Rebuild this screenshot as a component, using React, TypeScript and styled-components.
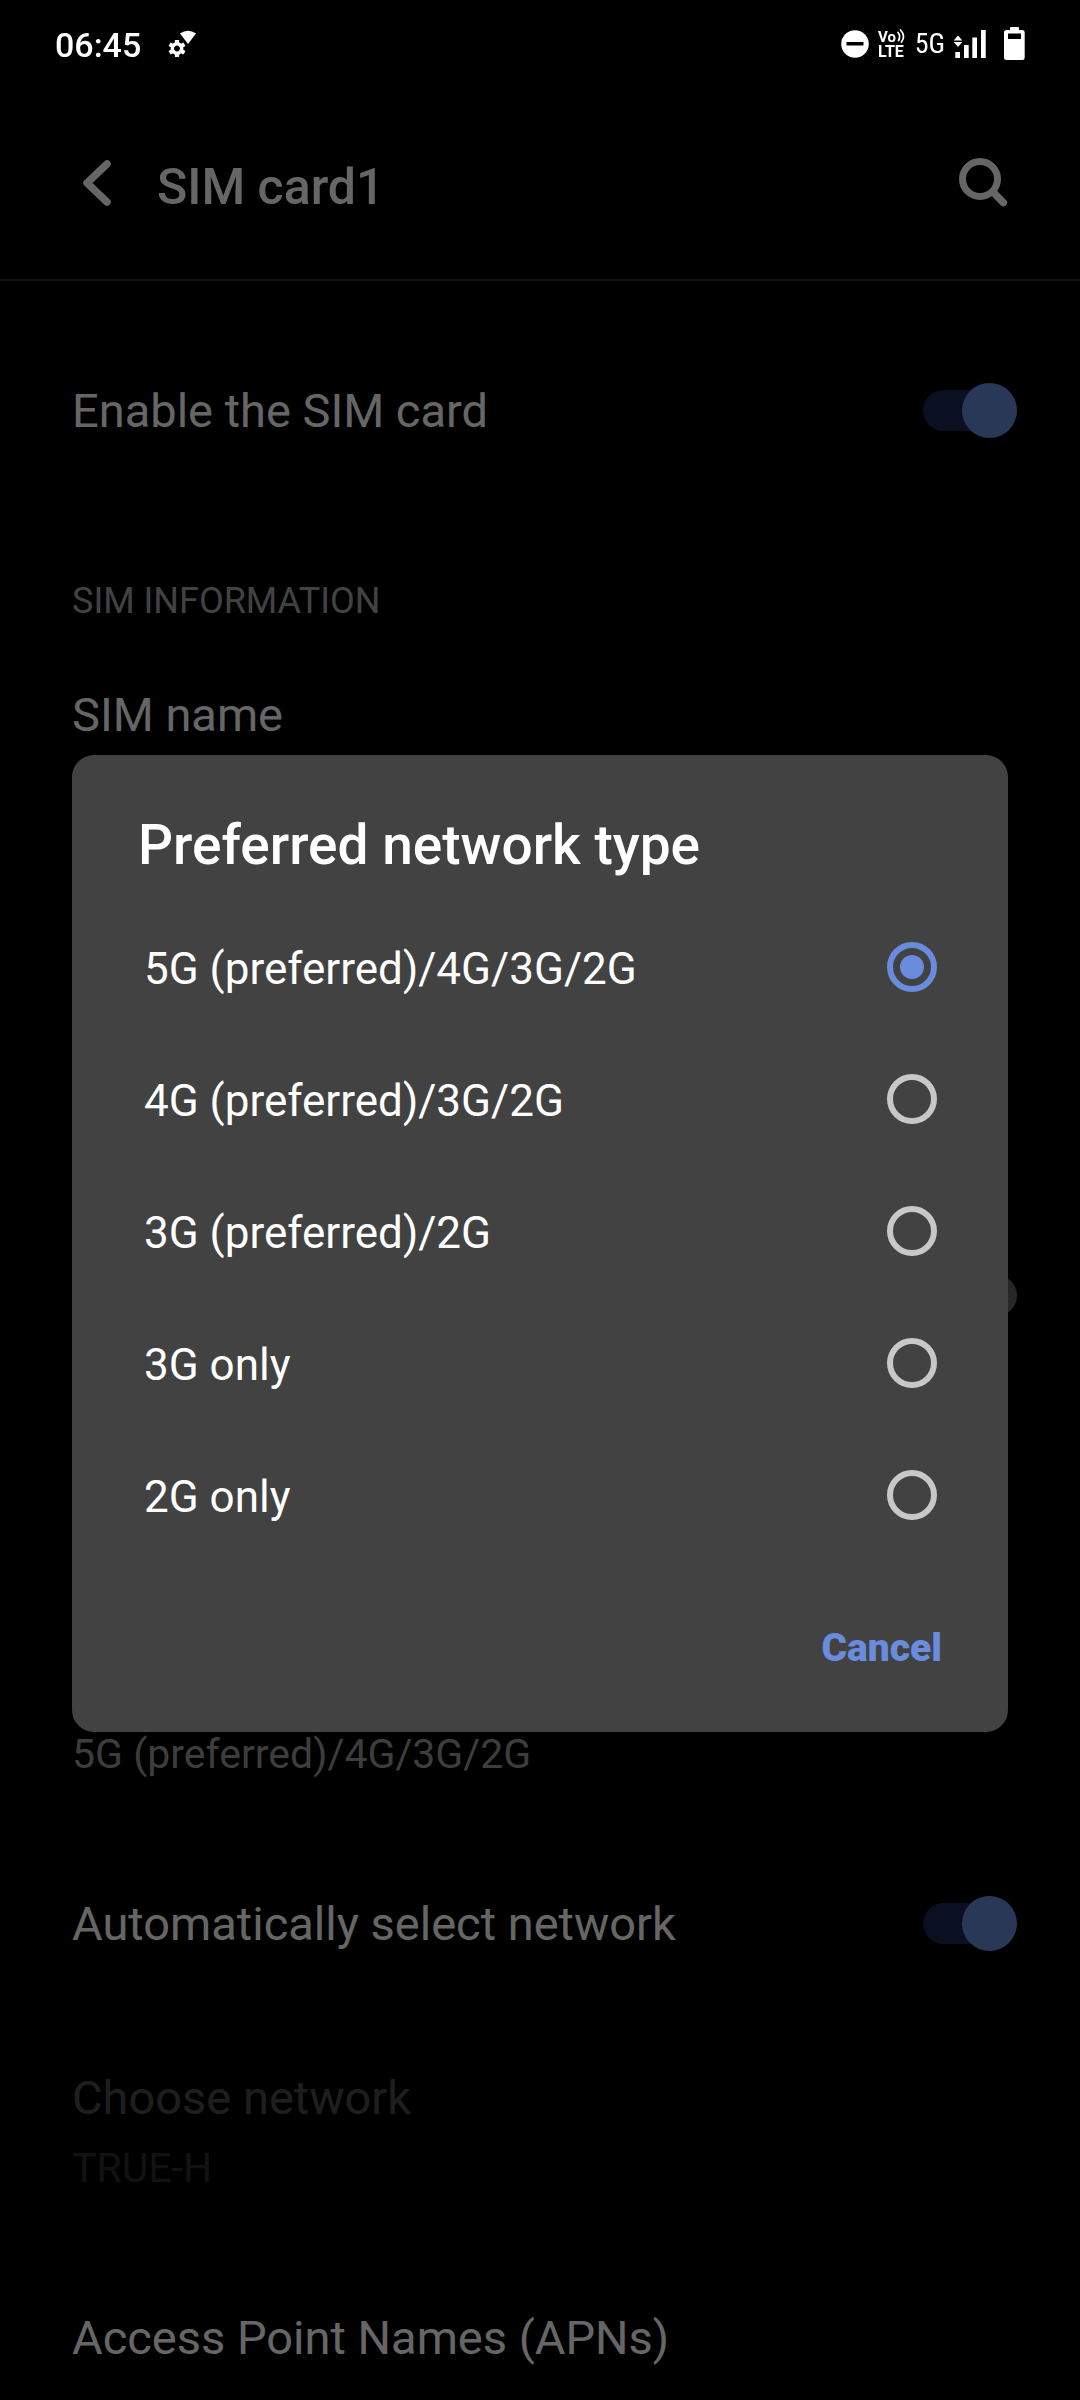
import React, { useState } from "react";
import styled, { createGlobalStyle } from "styled-components";

const color = {
  background: "#000000",
  surface: "#424242",
  text: "#ffffff",
  secondary: "#999999",
  section: "#a6a6a6",
  divider: "#2a2a2a",
  accent: "#6a8cdc",
  trackOn: "#192655",
  trackOff: "#616161",
  ring: "#c8c8c8",
};

const GlobalStyle = createGlobalStyle`
  * { box-sizing: border-box; }
  html, body { margin: 0; background: ${color.background}; }
  body { font-family: Roboto, "Noto Sans", sans-serif; color: ${color.text}; }
  h1, h2, p, ul { margin: 0; padding: 0; }
  button { margin: 0; padding: 0; border: 0; background: none; color: inherit; font: inherit; cursor: pointer; }
`;

const Screen = styled.div`
  display: flex;
  flex-direction: column;
  height: 100vh;
  overflow: hidden;
`;

const StatusBar = styled.header`
  position: relative;
  z-index: 2;
  display: flex;
  flex: none;
  align-items: center;
  justify-content: space-between;
  height: 87px;
  padding: 0 55px;
`;

const StatusGroup = styled.div<{ $gap: number }>`
  display: flex;
  align-items: center;
  gap: ${(p) => p.$gap}px;
`;

const Clock = styled.time`
  padding-top: 2px;
  font-size: 34px;
  line-height: 40px;
  font-weight: 500;
`;

const NetworkBadge = styled.span`
  font-family: "Roboto Condensed", "Liberation Sans Narrow", Roboto, sans-serif;
  font-size: 28px;
  line-height: 32px;
`;

const StatusIcon = styled.svg`
  display: block;
  flex: none;
  overflow: visible;
  fill: ${color.text};
`;

const AppBar = styled.div`
  display: flex;
  flex: none;
  align-items: center;
  height: 194px;
  padding: 0 61px;
  border-bottom: 2px solid ${color.divider};
`;

const IconButton = styled.button`
  display: flex;
  align-items: center;
  justify-content: center;
  width: 72px;
  height: 96px;
`;

const LineIcon = styled.svg`
  display: block;
  fill: none;
  stroke: ${color.text};
  stroke-linecap: round;
  stroke-linejoin: round;
`;

const PageTitle = styled.h1`
  flex: 1;
  padding: 7px 0 0 24px;
  font-size: 50px;
  line-height: 60px;
  font-weight: 500;
`;

const Settings = styled.main`
  flex: 1;
  min-height: 0;
  padding-top: 43px;
  overflow-y: auto;
  scrollbar-width: none;
`;

const Section = styled.section<{ $space?: number }>`
  margin-top: ${(p) => p.$space ?? 0}px;
`;

const SectionTitle = styled.h2`
  padding: 82px 72px 6px;
  color: ${color.section};
  font-size: 36px;
  line-height: 42px;
  font-weight: 400;
`;

const Row = styled.div<{ $disabled?: boolean }>`
  display: flex;
  align-items: center;
  justify-content: space-between;
  min-height: 174px;
  padding: 59px 63px 59px 72px;
  opacity: ${(p) => (p.$disabled ? 0.3 : 1)};
`;

const RowText = styled.div`
  display: flex;
  flex-direction: column;
  gap: 18px;
`;

const RowTitle = styled.label`
  font-size: 47px;
  line-height: 56px;
`;

const RowValue = styled.p`
  color: ${color.secondary};
  font-size: 41px;
  line-height: 48px;
`;

const Switch = styled.input`
  appearance: none;
  position: relative;
  flex: none;
  width: 94px;
  height: 41px;
  margin: 0 0 2px auto;
  border-radius: 21px;
  background: ${color.trackOff};

  &::before {
    content: "";
    position: absolute;
    top: -7px;
    left: 0;
    width: 55px;
    height: 55px;
    border-radius: 50%;
    background: #bdbdbd;
  }

  &:checked {
    background: ${color.trackOn};
  }

  &:checked::before {
    left: 39px;
    background: ${color.accent};
  }
`;

const Scrim = styled.div`
  position: fixed;
  inset: 0;
  z-index: 1;
  display: flex;
  align-items: center;
  padding: 87px 72px 0;
  background: rgba(0, 0, 0, 0.6);
`;

const Dialog = styled.div`
  flex: 1;
  padding: 58px 0 41px;
  border-radius: 22px;
  background: ${color.surface};
`;

const DialogTitle = styled.h2`
  padding: 0 66px 24px;
  font-size: 55px;
  line-height: 64px;
  font-weight: 500;
`;

const Option = styled.label`
  display: flex;
  align-items: center;
  justify-content: space-between;
  height: 132px;
  padding: 0 71px 0 72px;
  font-size: 44px;
  line-height: 52px;
`;

const OptionText = styled.span`
  padding-top: 3px;
`;

const Radio = styled.input`
  appearance: none;
  display: grid;
  place-content: center;
  flex: none;
  width: 50px;
  height: 50px;
  margin: 0;
  border: 6px solid ${color.ring};
  border-radius: 50%;

  &:checked {
    border-color: ${color.accent};
  }

  &:checked::before {
    content: "";
    width: 24px;
    height: 24px;
    border-radius: 50%;
    background: ${color.accent};
  }
`;

const Actions = styled.div`
  display: flex;
  justify-content: flex-end;
  padding: 44px 66px 0;
`;

const TextButton = styled.button`
  && {
    height: 86px;
    color: ${color.accent};
    font-size: 39px;
    line-height: 46px;
    font-weight: 900;
  }
`;

const WifiSettingsIcon = () => (
  <StatusIcon width="28" height="28" viewBox="0 0 28 28" aria-hidden="true">
    <path d="M11 3.5Q19 -2 27 3.5L19 14Z" />
    <g transform="translate(8 18.5)">
      <circle r="4.7" fill="none" stroke="#fff" strokeWidth="3.4" />
      {[0, 60, 120, 180, 240, 300].map((angle) => (
        <rect key={angle} x="-2.1" y="-8.6" width="4.2" height="4" rx="0.6" transform={`rotate(${angle})`} />
      ))}
    </g>
  </StatusIcon>
);

const DoNotDisturbIcon = () => (
  <StatusIcon width="28" height="28" viewBox="0 0 28 28" aria-hidden="true">
    <circle cx="14" cy="14" r="13.8" />
    <rect x="5.5" y="12" width="17" height="3.5" fill="#000" />
  </StatusIcon>
);

const VolteIcon = () => (
  <StatusIcon width="28" height="36" viewBox="0 0 28 36" role="img" aria-label="VoLTE">
    <text fontFamily="Roboto, sans-serif" fontWeight="700">
      <tspan x="0" y="16" fontSize="15">Vo</tspan>
      <tspan x="0" y="31" fontSize="16">LTE</tspan>
    </text>
    <path
      d="M20 6.500Q23 10 20.500 14.500M22.500 4Q28 10 23.500 16"
      fill="none"
      stroke="#fff"
      strokeWidth="1.7"
      strokeLinecap="round"
    />
  </StatusIcon>
);

const SignalIcon = () => (
  <StatusIcon width="32" height="28" viewBox="0 0 32 28" aria-hidden="true">
    <path d="M4 5.500L8.300 10.500H-.3ZM-.3 12H8.300L4 17Z" />
    <path d="M1.300 22H6V28H1.300ZM10 15H14.700V28H10ZM18.300 7.500H23V28H18.300ZM27 0H31.700V28H27Z" />
  </StatusIcon>
);

const BatteryIcon = () => (
  <StatusIcon width="21" height="33" viewBox="0 0 21 33" aria-hidden="true">
    <path
      fillRule="evenodd"
      d="M6 3V1Q6 0 7 0H14Q15 0 15 1V3H18.500Q20.700 3 20.700 5.500V30.500Q20.700 33 18.500 33H2.500Q0 33 0 30.500V5.500Q0 3 2.500 3ZM4 6.500V12H17V6.500Z"
    />
  </StatusIcon>
);

const BackIcon = () => (
  <LineIcon width="32" height="48" viewBox="0 0 32 48" strokeWidth="7.5" aria-hidden="true">
    <path d="M26 5L6 24L26 43" />
  </LineIcon>
);

const SearchIcon = () => (
  <LineIcon width="52" height="52" viewBox="0 0 52 52" strokeWidth="7" aria-hidden="true">
    <circle cx="23" cy="22" r="17.5" />
    <path d="M37.500 36.500L46.300 45.600" strokeWidth="7.5" />
  </LineIcon>
);

const networkTypes = [
  "5G (preferred)/4G/3G/2G",
  "4G (preferred)/3G/2G",
  "3G (preferred)/2G",
  "3G only",
  "2G only",
];

export default function App() {
  const [selected, setSelected] = useState(networkTypes[0]);
  const [open, setOpen] = useState(true);

  return (
    <>
      <GlobalStyle />
      <Screen>
        <StatusBar>
          <StatusGroup $gap={28}>
            <Clock>06:45</Clock>
            <WifiSettingsIcon />
          </StatusGroup>
          <StatusGroup $gap={18}>
            <StatusGroup $gap={9}>
              <DoNotDisturbIcon />
              <VolteIcon />
              <NetworkBadge>5G</NetworkBadge>
              <SignalIcon />
            </StatusGroup>
            <BatteryIcon />
          </StatusGroup>
        </StatusBar>

        <AppBar>
          <IconButton aria-label="Back">
            <BackIcon />
          </IconButton>
          <PageTitle>SIM card1</PageTitle>
          <IconButton aria-label="Search">
            <SearchIcon />
          </IconButton>
        </AppBar>

        <Settings>
          <Row>
            <RowTitle htmlFor="enable-sim">Enable the SIM card</RowTitle>
            <Switch id="enable-sim" type="checkbox" role="switch" defaultChecked />
          </Row>
          <Section>
            <SectionTitle>SIM INFORMATION</SectionTitle>
            <Row>
              <RowTitle as="span">SIM name</RowTitle>
            </Row>
          </Section>
          <Section $space={407}>
            <Row>
              <Switch type="checkbox" role="switch" aria-label="Data roaming" />
            </Row>
          </Section>
          <Section $space={214}>
            <Row>
              <RowText>
                <RowTitle as="span">Preferred network type</RowTitle>
                <RowValue>{selected}</RowValue>
              </RowText>
            </Row>
            <Row>
              <RowTitle htmlFor="auto-network">Automatically select network</RowTitle>
              <Switch id="auto-network" type="checkbox" role="switch" defaultChecked />
            </Row>
            <Row $disabled>
              <RowText>
                <RowTitle as="span">Choose network</RowTitle>
                <RowValue>TRUE-H</RowValue>
              </RowText>
            </Row>
            <Row>
              <RowTitle as="span">Access Point Names (APNs)</RowTitle>
            </Row>
          </Section>
        </Settings>
      </Screen>

      {open && (
        <Scrim>
          <Dialog role="dialog" aria-modal="true" aria-labelledby="dialog-title">
            <DialogTitle id="dialog-title">Preferred network type</DialogTitle>
            {networkTypes.map((type) => (
              <Option key={type}>
                <OptionText>{type}</OptionText>
                <Radio
                  type="radio"
                  name="network-type"
                  checked={selected === type}
                  onChange={() => setSelected(type)}
                />
              </Option>
            ))}
            <Actions>
              <TextButton onClick={() => setOpen(false)}>Cancel</TextButton>
            </Actions>
          </Dialog>
        </Scrim>
      )}
    </>
  );
}
